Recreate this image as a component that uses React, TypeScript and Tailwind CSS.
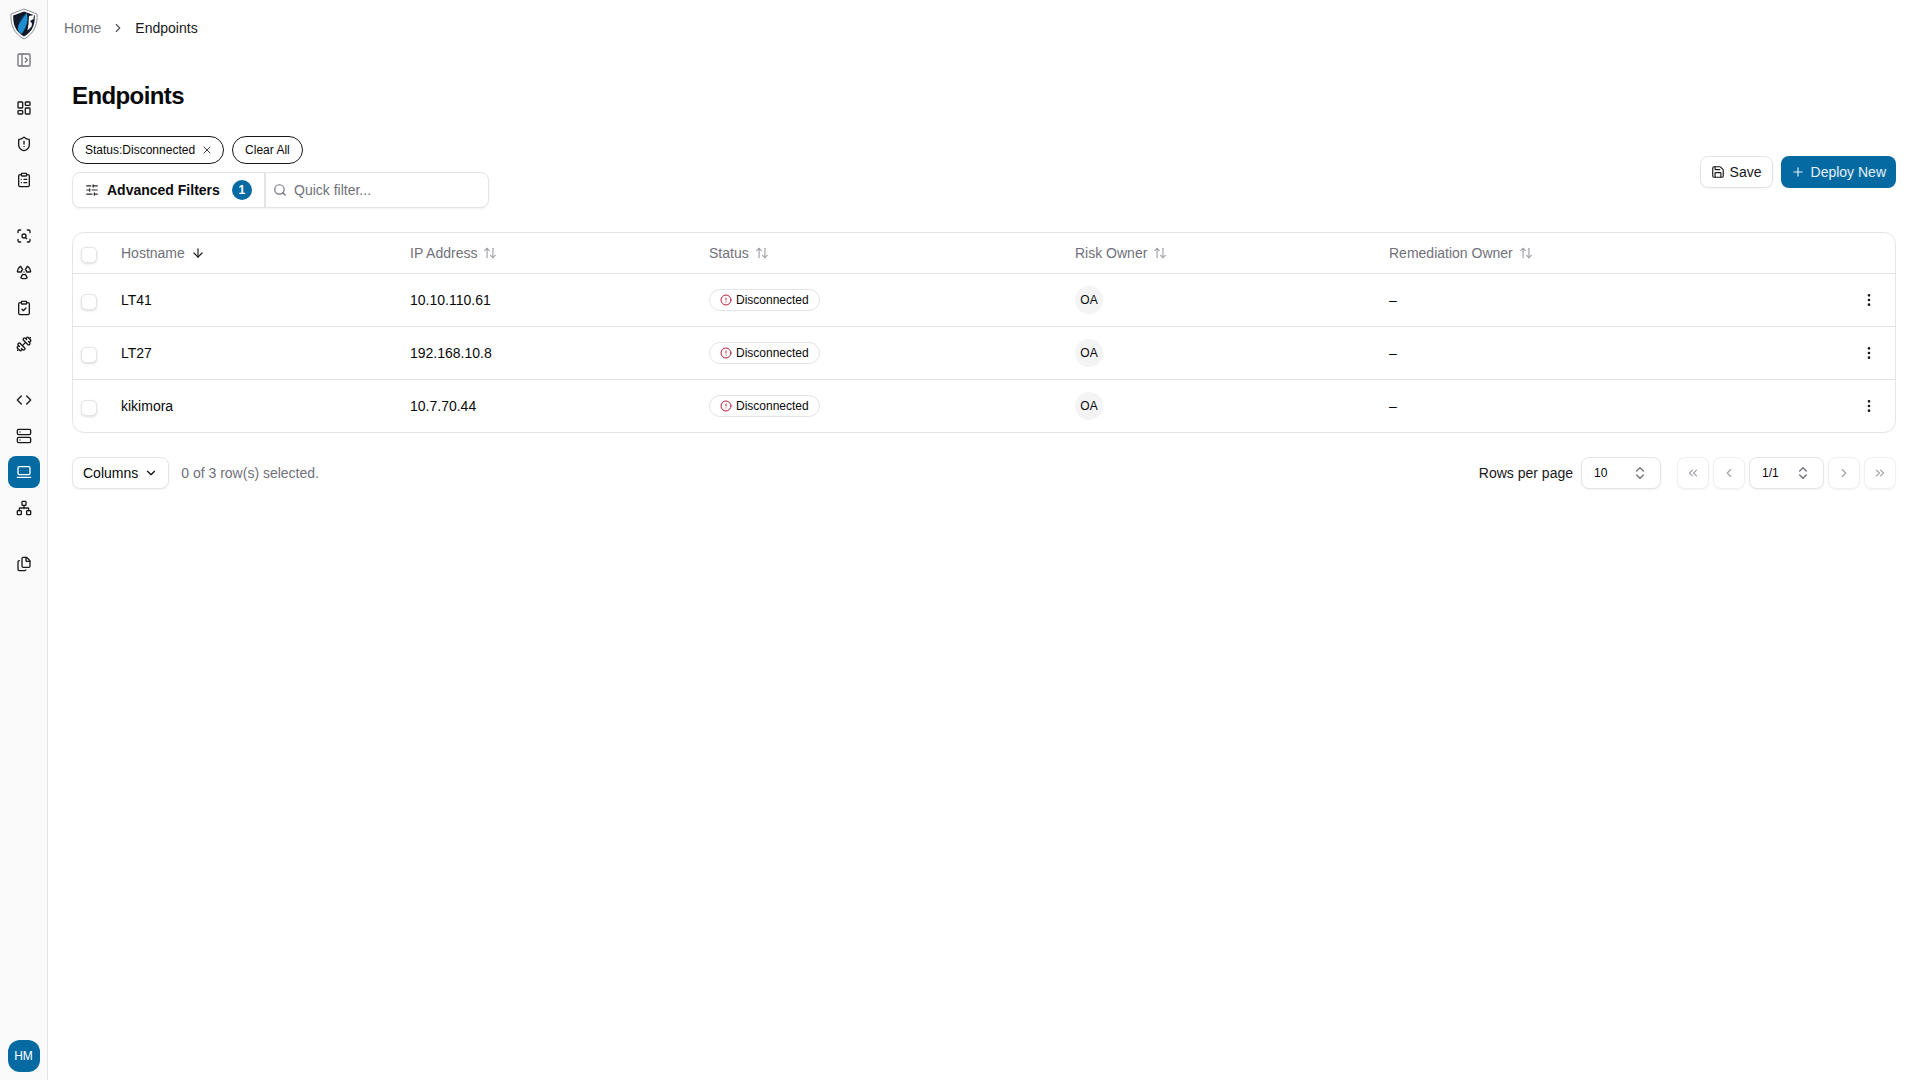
import React from "react";
import {
  PanelLeftOpen, LayoutDashboard, ShieldAlert, ClipboardList, ScanSearch, Radiation, ClipboardCheck, Dumbbell,
  Code, Server, LaptopMinimal, Network, Files, ChevronRight, X, SlidersHorizontal, Search, Save, Plus, ArrowDown, ArrowUpDown,
  CircleAlert, EllipsisVertical, ChevronDown, ChevronsUpDown, ChevronsLeft, ChevronLeft, ChevronsRight,
} from "lucide-react";

const Logo = () => (
  <svg width="30" height="32" viewBox="0 0 30 32" aria-hidden="true">
    <path d="M15 1 L28 6 C28.5 16 26 25 15 31 C4 25 1.5 16 2 6 Z" fill="#fff" stroke="#8a8f96" strokeWidth="1" />
    <path d="M15 3.5 L25.8 7.5 C26 16 24 23.5 15 28.5 C6 23.5 4 16 4.2 7.5 Z" fill="#111827" />
    <path d="M18 5 C14 9 9.5 14 9 20 C8.9 22.5 10 25 12.5 26 C15.5 22.5 18 17 18.5 12 Z" fill="#1d8fd1" />
    <path d="M14 8 C11.5 11 10 14 9.5 17 C12 14 14 11 15.5 8 Z" fill="#0c4a78" />
    <path d="M20 8 L25 7 L24.5 11 L21 13 L23 15.5 L22.5 18.5 L18.5 22.5 L19.5 16 Z" fill="#fff" />
  </svg>
);

const Nav = ({ icon: Icon, muted }: { icon: any; muted?: boolean }) => (
  <div className={`flex h-9 w-8 items-center justify-center ${muted ? "text-[#71717a]" : "text-[#18181b]"}`}>
    <Icon size={16} strokeWidth={2} />
  </div>
);

const Sidebar = () => (
  <aside className="flex h-screen w-12 shrink-0 flex-col items-center border-r border-[#e4e4e7] bg-[#fafafa]">
    <div className="mt-2 h-[32px]"><Logo /></div>
    <div className="mt-0.5"><Nav icon={PanelLeftOpen} muted /></div>
    <div className="mt-3 flex flex-col"><Nav icon={LayoutDashboard} /><Nav icon={ShieldAlert} /><Nav icon={ClipboardList} /></div>
    <div className="mt-5 flex flex-col"><Nav icon={ScanSearch} /><Nav icon={Radiation} /><Nav icon={ClipboardCheck} /><Nav icon={Dumbbell} /></div>
    <div className="mt-5 flex flex-col">
      <Nav icon={Code} /><Nav icon={Server} />
      <div className="my-0.5 flex h-8 w-8 items-center justify-center rounded-lg bg-[#066aa2] text-white">
        <LaptopMinimal size={16} />
      </div>
      <Nav icon={Network} />
    </div>
    <div className="mt-5"><Nav icon={Files} /></div>
    <div className="mt-auto mb-2 flex h-8 w-8 items-center justify-center rounded-xl bg-[#066aa2] text-xs text-white">HM</div>
  </aside>
);

const SortHead = ({ label, sorted }: { label: string; sorted?: boolean }) => (
  <div className="flex items-center gap-1.5 text-sm font-normal text-[#71717a]">
    <span>{label}</span>
    {sorted ? <ArrowDown size={14} className="text-[#18181b]" /> : <ArrowUpDown size={14} className="text-[#a1a1aa]" />}
  </div>
);

const Check = () => (
  <span className="mt-1 block h-4 w-4 rounded-[5px] border border-[#e4e4e7] bg-white shadow-sm" />
);

const rows = [
  { host: "LT41", ip: "10.10.110.61" },
  { host: "LT27", ip: "192.168.10.8" },
  { host: "kikimora", ip: "10.7.70.44" },
];

const PageBtn = ({ icon: Icon }: { icon: any }) => (
  <div className="flex h-8 w-8 items-center justify-center rounded-lg border border-[#f0f0f1] bg-white text-[#a1a1aa] shadow-xs">
    <Icon size={14} />
  </div>
);

export default function App() {
  return (
    <div className="flex min-h-screen bg-white font-['Liberation_Sans',Arial,sans-serif] text-[#09090b]">
      <Sidebar />
      <main className="min-w-0 flex-1">
        <nav className="flex h-14 items-center px-4 text-sm">
          <span className="text-[#71717a]">Home</span>
          <ChevronRight size={14} className="mx-2.5 text-[#52525b]" />
          <span className="text-[#18181b]">Endpoints</span>
        </nav>
        <div className="px-6">
          <h1 className="mt-6 mb-6 text-2xl font-bold leading-8 tracking-tight">Endpoints</h1>

          <div className="flex items-center justify-between">
            <div className="flex flex-col gap-2">
              <div className="flex gap-2">
                <div className="flex h-7 items-center gap-1.5 rounded-full border border-[#18181b] pr-2.5 pl-3 text-xs">
                  <span>Status:Disconnected</span>
                  <X size={12} className="text-[#3f3f46]" />
                </div>
                <div className="flex h-7 items-center rounded-full border border-[#18181b] px-3 text-xs">Clear All</div>
              </div>
              <div className="flex h-9 w-[417px] items-center rounded-lg border border-[#e4e4e7] bg-white shadow-xs">
                <div className="flex h-full w-[193px] items-center border-r-2 border-[#e4e4e7] pl-3">
                  <SlidersHorizontal size={14} className="text-[#27272a]" />
                  <span className="ml-2 text-sm font-bold">Advanced Filters</span>
                  <span className="ml-3 flex h-5 w-5 items-center justify-center rounded-full bg-[#066aa2] text-xs font-bold text-white">1</span>
                </div>
                <div className="flex items-center pl-[7px] text-sm text-[#71717a]">
                  <Search size={14} />
                  <span className="ml-[7px]">Quick filter...</span>
                </div>
              </div>
            </div>
            <div className="flex gap-2">
              <div className="flex h-8 items-center gap-[5px] rounded-lg border border-[#e4e4e7] bg-white px-2.5 text-sm text-[#18181b] shadow-xs">
                <Save size={14} /> Save
              </div>
              <div className="flex h-8 items-center gap-1.5 rounded-lg bg-[#066aa2] px-2.5 text-sm text-[#e6f1f7]">
                <Plus size={14} /> Deploy New
              </div>
            </div>
          </div>

          <div className="mt-6 overflow-hidden rounded-xl border border-[#e4e4e7]">
            <table className="w-full table-fixed border-collapse text-sm">
              <colgroup>
                <col className="w-[48px]" />
                <col className="w-[289px]" />
                <col className="w-[299px]" />
                <col className="w-[366px]" />
                <col className="w-[314px]" />
                <col />
                <col className="w-[34px]" />
              </colgroup>
              <thead>
                <tr className="h-10 border-b border-[#e4e4e7]">
                  <th className="pl-2 text-left align-middle"><Check /></th>
                  <th className="text-left"><SortHead label="Hostname" sorted /></th>
                  <th className="text-left"><SortHead label="IP Address" /></th>
                  <th className="text-left"><SortHead label="Status" /></th>
                  <th className="text-left"><SortHead label="Risk Owner" /></th>
                  <th className="text-left"><SortHead label="Remediation Owner" /></th>
                  <th />
                </tr>
              </thead>
              <tbody>
                {rows.map((r, i) => (
                  <tr key={r.host} className={`h-[53px] ${i < rows.length - 1 ? "border-b border-[#e4e4e7]" : ""}`}>
                    <td className="pl-2"><Check /></td>
                    <td>{r.host}</td>
                    <td>{r.ip}</td>
                    <td>
                      <span className="inline-flex h-[22px] items-center gap-1 rounded-full border border-[#e4e4e7] px-[10px] text-xs">
                        <CircleAlert size={12} className="text-[#b91c3c]" />
                        Disconnected
                      </span>
                    </td>
                    <td>
                      <span className="flex h-7 w-7 items-center justify-center rounded-full bg-[#f4f4f5] text-xs">OA</span>
                    </td>
                    <td>–</td>
                    <td><EllipsisVertical size={16} className="text-[#18181b]" /></td>
                  </tr>
                ))}
              </tbody>
            </table>
          </div>

          <div className="mt-6 flex items-center justify-between">
            <div className="flex items-center gap-3">
              <div className="flex h-8 items-center gap-1.5 rounded-lg border border-[#e4e4e7] bg-white px-[10px] text-sm shadow-xs">
                Columns <ChevronDown size={14} />
              </div>
              <span className="text-sm text-[#71717a]">0 of 3 row(s) selected.</span>
            </div>
            <div className="flex items-center">
              <span className="text-sm text-[#18181b]">Rows per page</span>
              <div className="ml-2 flex h-8 w-20 items-center justify-between rounded-lg border border-[#e4e4e7] bg-white px-3 text-xs shadow-xs">
                10 <ChevronsUpDown size={16} className="text-[#71717a]" />
              </div>
              <div className="ml-4 flex items-center gap-1">
                <PageBtn icon={ChevronsLeft} />
                <PageBtn icon={ChevronLeft} />
                <div className="flex h-8 w-[75px] items-center justify-between rounded-lg border border-[#e4e4e7] bg-white px-3 text-xs shadow-xs">
                  1/1 <ChevronsUpDown size={16} className="text-[#71717a]" />
                </div>
                <PageBtn icon={ChevronRight} />
                <PageBtn icon={ChevronsRight} />
              </div>
            </div>
          </div>
        </div>
      </main>
    </div>
  );
}
